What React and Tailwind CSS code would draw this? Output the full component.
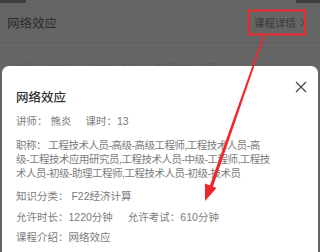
export default function App() {
  const font = { fontFamily: '"Noto Sans CJK SC", "Noto Sans", sans-serif' };
  const body = { fontFamily: '"Liberation Sans", "Noto Sans CJK SC", sans-serif' };
  return (
    <div
      className="relative w-[320px] h-[252px] overflow-hidden bg-[#656565]"
      style={font}
    >
      {/* top strip */}
      <div className="flex h-[3px] justify-between">
        <div className="w-[26px] bg-[#3e3e3e]" />
        <div className="w-[24px] bg-[#3e3e3e]" />
      </div>
      {/* header */}
      <div className="flex h-[40px] items-center justify-between pl-[7px] pr-[15px] border-b border-[#5d5d5d]">
        <span className="text-[12.5px] leading-[16px] text-[#2c2c2c]">网络效应</span>
        <span className="flex items-center gap-[4px] text-[10.5px] leading-[14px] text-[#3a3a3a]">
          课程详情
          <svg width="5" height="9" viewBox="0 0 5 9">
            <path d="M0.6 0.6 L4.2 4.5 L0.6 8.4" fill="none" stroke="#3a3a3a" strokeWidth="0.9" />
          </svg>
        </span>
      </div>
      {/* faint content behind sheet */}
      <div className="flex h-[23px] items-end overflow-hidden pl-[14px]">
        <span className="translate-y-[9px] text-[10.5px] leading-[14px] text-[#5a5a5a]">
          讲师： 熊炎　　课时：13　　工程技术人员
        </span>
      </div>
      {/* sheet */}
      <div
        className="relative mx-[2px] h-[200px] rounded-t-[7px] bg-white pl-[14px] pt-[23px] text-[#7c7c7c]"
        style={body}
      >
        <svg className="absolute right-[11px] top-[15px]" width="12" height="12" viewBox="0 0 12 12">
          <path d="M1 1 L11 11 M11 1 L1 11" stroke="#4a4a4a" strokeWidth="1.3" fill="none" />
        </svg>
        <div className="text-[12.5px] leading-[16px] font-medium text-[#333]" style={font}>网络效应</div>
        <div className="mt-[9px] flex text-[10.5px] leading-[14px] whitespace-nowrap">
          <span>讲师： 熊炎</span>
          <span className="ml-[14px]">课时：13</span>
        </div>
        <div className="mt-[10px] text-[10.5px] leading-[14px] tracking-[-0.5px] whitespace-nowrap">
          职称： 工程技术人员-高级-高级工程师,工程技术人员-高
          <br />
          级-工程技术应用研究员,工程技术人员-中级-工程师,工程技
          <br />
          术人员-初级-助理工程师,工程技术人员-初级-技术员
        </div>
        <div className="mt-[9px] text-[10.5px] leading-[14px] whitespace-nowrap">知识分类： F22经济计算</div>
        <div className="mt-[7px] flex text-[10.5px] leading-[14px] whitespace-nowrap">
          <span>允许时长：1220分钟</span>
          <span className="ml-[15px]">允许考试：610分钟</span>
        </div>
        <div className="mt-[6px] text-[10.5px] leading-[14px] whitespace-nowrap">课程介绍：网络效应</div>
      </div>
      {/* annotation overlay */}
      <svg className="pointer-events-none absolute left-0 top-0" width="320" height="252" viewBox="0 0 320 252">
        <rect x="249" y="10.5" width="56" height="24" fill="none" stroke="#f0262a" strokeWidth="2" />
        <polygon points="263,36 264.6,36 212.5,188 209.3,187" fill="#f0262a" />
        <polygon points="205,201 216.5,188 205,183.5" fill="#f0262a" />
      </svg>
    </div>
  );
}
